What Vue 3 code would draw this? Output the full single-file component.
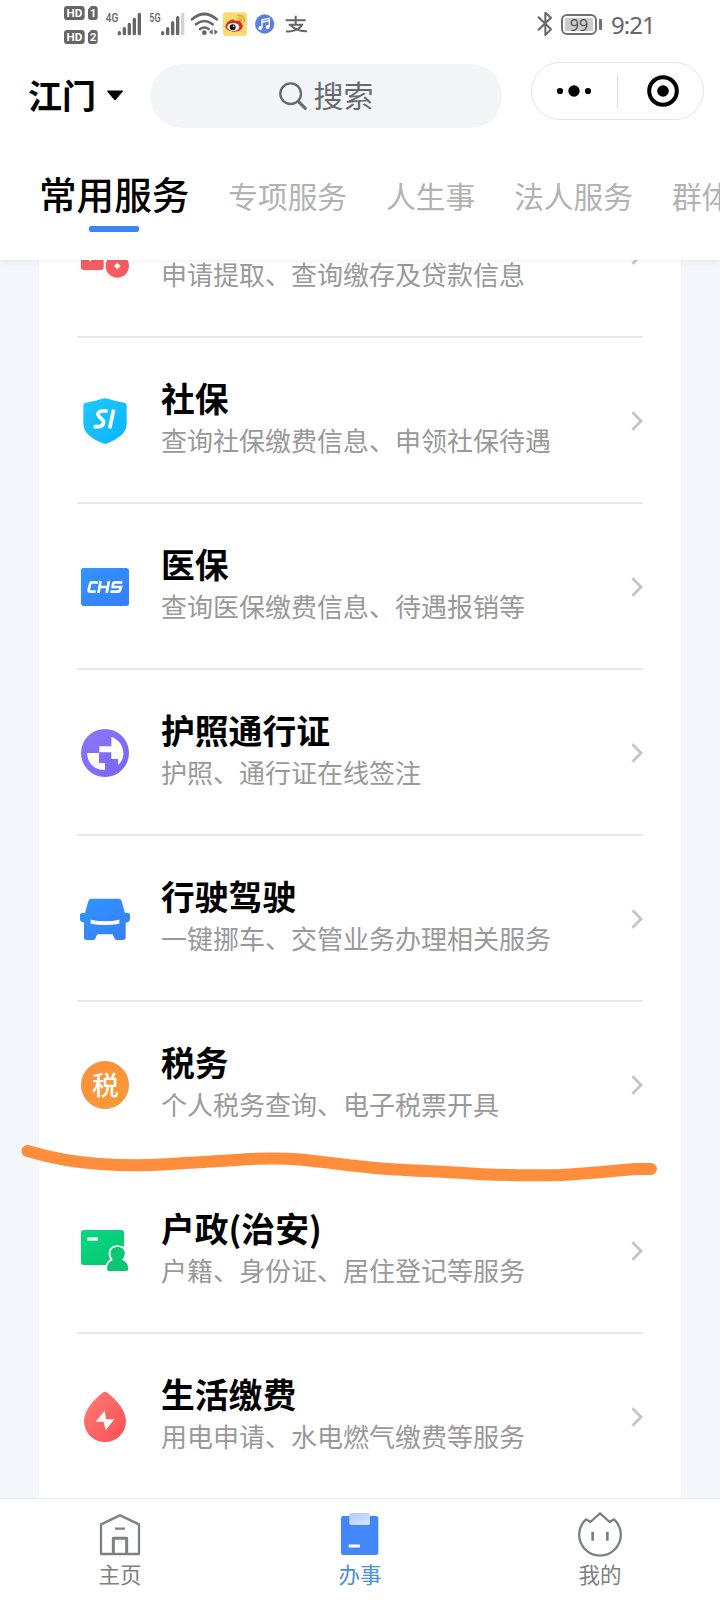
<script setup>
const tabs = ['专项服务', '人生事', '法人服务', '群体服务']

const services = [
  { id: 'fund', title: '公积金', desc: '申请提取、查询缴存及贷款信息', box: '144 -66 162 162' },
  { id: 'social', title: '社保', desc: '查询社保缴费信息、申领社保待遇', box: '144 432 162 162' },
  { id: 'medical', title: '医保', desc: '查询医保缴费信息、待遇报销等', box: '54 60 162 162' },
  { id: 'passport', title: '护照通行证', desc: '护照、通行证在线签注', box: '54 558 162 162' },
  { id: 'drive', title: '行驶驾驶', desc: '一键挪车、交管业务办理相关服务', box: '54 66 162 162' },
  { id: 'tax', title: '税务', desc: '个人税务查询、电子税票开具', box: '54 564 162 162', plain: true },
  { id: 'household', title: '户政(治安)', desc: '户籍、身份证、居住登记等服务', box: '234 282 162 162' },
  { id: 'living', title: '生活缴费', desc: '用电申请、水电燃气缴费等服务', box: '54 90 162 162', plain: true },
]
</script>

<template>
  <div class="phone">
    <header class="top">
      <div class="status">
        <svg class="status-left" width="270" height="48" viewBox="0 0 810 144">
          <g fill="#666">
            <rect x="42" y="18" width="62" height="42" rx="10" />
            <path d="M124 18h10q9 0 9 9v24q0 9-9 9h-11q-9 0-9-9V28z" />
            <rect x="42" y="90" width="62" height="42" rx="10" />
            <path d="M124 90h10q9 0 9 9v24q0 9-9 9h-11q-9 0-9-9v-23z" />
          </g>
          <g class="badge-text" text-anchor="middle">
            <text x="73" y="51">HD</text>
            <text x="129" y="51">1</text>
            <text x="73" y="123">HD</text>
            <text x="129" y="123">2</text>
          </g>
          <g class="net-text">
            <text x="167" y="67" textLength="38" lengthAdjust="spacingAndGlyphs">4G</text>
            <text x="298" y="67" textLength="34" lengthAdjust="spacingAndGlyphs">5G</text>
          </g>
          <g fill="none" stroke="#666" stroke-width="10" stroke-linecap="round">
            <path d="M208 98v3M223 86v15M238 73v28M253 58v43M268 43v58" />
            <path d="M338 98v3M353 86v15M368 68v33M383 53v48" />
            <path d="M398 43v58" stroke="#d2d2d2" />
            <path d="M426 58Q463 26 500 58M438 73Q463 53 488 73M450 87Q463 78 476 87" stroke-width="8" />
          </g>
          <circle cx="463" cy="98" r="7" fill="#666" />
          <path d="M488 88v16l-11-8zM493 88v16l11-8z" fill="#666" />
          <rect x="519" y="37" width="72" height="71" rx="10" fill="#fbdc73" />
          <path d="M526 79q3-13 17-19 10-4 12 3 16-5 18 5 8 6 4 15-6 12-26 12-24-1-25-16z" fill="#dc2a25" />
          <ellipse cx="550" cy="81" rx="18" ry="12" fill="#fff" />
          <circle cx="548" cy="82" r="9" fill="#151515" />
          <circle cx="551" cy="79" r="2.5" fill="#fff" />
          <path d="M564 46q19-1 19 18M565 55q9 0 9 9" fill="none" stroke="#eda52d" stroke-width="5" stroke-linecap="round" />
          <circle cx="644" cy="72" r="29" fill="#5b80df" />
          <path d="M636 83V60l22-5v25M636 67l22-5" fill="none" stroke="#fff" stroke-width="4" />
          <circle cx="631" cy="84" r="6" fill="#fff" />
          <circle cx="653" cy="81" r="6" fill="#fff" />
          <path d="M707 61h60M737 47v27M716 74h40C752 86 728 97 708 94M722 76C732 86 750 94 771 94" fill="none" stroke="#666" stroke-width="6" />
        </svg>
        <div class="status-right">
          <svg width="16" height="26" viewBox="52 34 48 78">
            <path d="M55 51l39 38-17 17V39l17 15-39 38" fill="none" stroke="#666" stroke-width="6" stroke-linejoin="round" />
          </svg>
          <div class="battery"><span>99</span></div>
          <time>9:21</time>
        </div>
      </div>

      <div class="nav">
        <div class="city">
          <span>江门</span>
          <svg width="18" height="11" viewBox="0 0 18 11"><path d="M2 .5h14q1.500 0 .6 1.200L10 9.500q-1 1-2 0L1.400 1.700Q.5.5 2 .5z" fill="#000" /></svg>
        </div>
        <div class="search">
          <svg width="28" height="28" viewBox="836 95 84 84">
            <circle cx="871" cy="130" r="31" fill="none" stroke="#666a6f" stroke-width="7" />
            <path d="M894 153l21 21" stroke="#666a6f" stroke-width="9" stroke-linecap="round" />
          </svg>
          <span>搜索</span>
        </div>
        <div class="capsule">
          <svg width="36" height="14" viewBox="0 0 36 14"><circle cx="4" cy="7" r="3.100" /><circle cx="18" cy="7" r="5.700" /><circle cx="32" cy="7" r="3.100" /></svg>
          <i></i>
          <svg width="34" height="34" viewBox="0 0 34 34"><circle cx="17" cy="17" r="13.800" fill="none" stroke="#000" stroke-width="4" /><circle cx="17" cy="17" r="5.800" /></svg>
        </div>
      </div>

      <nav class="tabs">
        <div class="tab active">常用服务</div>
        <div v-for="t in tabs" :key="t" class="tab">{{ t }}</div>
      </nav>
    </header>

    <main class="body">
      <div class="card">
        <section v-for="s in services" :key="s.id" class="row" :class="{ plain: s.plain }">
          <svg class="icon" :viewBox="s.box">
            <defs>
              <linearGradient id="cyan" x1="0" y1="0" x2="1" y2="1"><stop stop-color="#21c8fb" /><stop offset="1" stop-color="#08b4ff" /></linearGradient>
              <linearGradient id="blue" x1="0" y1="0" x2="1" y2="1"><stop stop-color="#2f96ff" /><stop offset="1" stop-color="#3a7cfa" /></linearGradient>
              <linearGradient id="violet" x1="0" y1="0" x2="1" y2="1"><stop stop-color="#8c79f8" /><stop offset="1" stop-color="#7465f8" /></linearGradient>
              <linearGradient id="amber" x1="0" y1="0" x2="1" y2="1"><stop stop-color="#ff8f3c" /><stop offset="1" stop-color="#f99b34" /></linearGradient>
              <linearGradient id="green" x1="0" y1="0" x2="1" y2="1"><stop stop-color="#05d885" /><stop offset="1" stop-color="#0bc56d" /></linearGradient>
              <linearGradient id="red" x1="0" y1="0" x2="1" y2="1"><stop stop-color="#ff7b74" /><stop offset="1" stop-color="#fb5055" /></linearGradient>
            </defs>
            <g v-if="s.id === 'fund'">
              <path d="M153-30h68v82q0 8-8 8h-52q-8 0-8-8z" fill="#f95c60" />
              <path d="M171 24h21M181 14v20" stroke="#fff" stroke-width="6" />
              <circle cx="262" cy="48" r="40" fill="#fff" />
              <circle cx="262" cy="48" r="35" fill="#f95c60" />
              <path d="M262 38l10 10-10 10-10-10z" fill="#fff" />
            </g>
            <g v-else-if="s.id === 'social'">
              <path d="M216 446q9-3 18 0 26 9 49 12 7 1 7 8v54q0 23-18 37-16 13-40 23-7 3-14 0-24-10-40-23-18-14-18-37v-54q0-7 7-8 23-3 49-12z" fill="url(#cyan)" />
              <path d="M233 483h-16q-13 1-13 10 0 5 10 13 9 8 6 15-3 8-12 9h-17" fill="none" stroke="#fff" stroke-width="11" />
              <path d="M251 479l-12 56" stroke="#fff" stroke-width="11" />
            </g>
            <g v-else-if="s.id === 'medical'">
              <rect x="63" y="84" width="144" height="114" rx="8" fill="url(#blue)" />
              <path d="M114 127H97q-6 0-7 6l-4 17q-1 5 5 5h16M122 123l-7 36M147 123l-7 36M118 141h27M187 127h-22q-5 0-6 6l-1 8h25l-3 9q-1 5-6 5h-23" fill="none" stroke="#fff" stroke-width="8" />
            </g>
            <g v-else-if="s.id === 'passport'">
              <circle cx="135" cy="639" r="72" fill="url(#violet)" />
              <path d="M154 590q37 15 36 54-2 20-16 31v-18h-20v-20h-36v-18h36z" fill="#fff" />
              <path d="M81 639h36v30h18v21q-50-1-54-51z" fill="#fff" />
            </g>
            <g v-else-if="s.id === 'drive'">
              <path d="M94 86h82q7 0 9 7l10 36h9q6 0 6 6v13q0 6-6 8l-7 2v45q0 7-7 7h-20q-5 0-7-6l-5-11h-46l-5 11q-2 6-7 6H79q-7 0-7-7v-45l-6-2q-6-2-6-8v-13q0-6 6-6h9l10-36q2-7 9-7z" fill="url(#blue)" />
              <path d="M92 149q43 10 86 0v12q-43 8-86 0z" fill="#fff" />
            </g>
            <g v-else-if="s.id === 'tax'">
              <circle cx="135" cy="645" r="71" fill="url(#amber)" stroke="#d9934e" stroke-width="2" />
              <text class="tax-text" x="136" y="674" text-anchor="middle">税</text>
            </g>
            <g v-else-if="s.id === 'household'">
              <rect x="243" y="300" width="129" height="105" rx="8" fill="url(#green)" />
              <path d="M262 327h32" stroke="#fff" stroke-width="10" />
              <path d="M353 351c-26 0-26 27-13 38-12 5-19 14-19 28q0 6 6 6h52q6 0 6-6c0-14-7-23-19-28 13-11 13-38-13-38z" fill="#fff" stroke="#fff" stroke-width="11" />
              <path d="M353 351c-26 0-26 27-13 38-12 5-19 14-19 28q0 6 6 6h52q6 0 6-6c0-14-7-23-19-28 13-11 13-38-13-38z" fill="#0bc774" />
            </g>
            <g v-else>
              <path d="M128 98q7-5 14 0C172 122 198 152 198 184A63 62 0 0 1 72 184C72 152 98 122 128 98z" fill="url(#red)" />
              <path d="M134 152l-27 33h24l6 26 26-33h-25z" fill="#fff" />
            </g>
          </svg>
          <div class="text">
            <h2>{{ s.title }}</h2>
            <p>{{ s.desc }}</p>
          </div>
          <svg class="chevron" width="12" height="20" viewBox="0 0 12 20"><path d="M1.500 1.200L10 10l-8.500 8.800" fill="none" stroke="#c6c6c6" stroke-width="2.800" /></svg>
        </section>
      </div>
    </main>

    <footer class="bar">
      <div class="item">
        <svg viewBox="108 450 144 144" fill="none" stroke="#7c8085" stroke-width="7" stroke-linejoin="round">
          <path d="M180 466l57 27v89H123v-89zM165 506h30" />
          <path d="M160 582v-47h40v47" stroke-width="9" />
        </svg>
        <span>主页</span>
      </div>
      <div class="item on">
        <svg viewBox="48 90 144 144">
          <defs><linearGradient id="clip" x1="0" y1="0" x2="1" y2="1"><stop stop-color="#b3cbfc" /><stop offset="1" stop-color="#d8e4ff" /></linearGradient></defs>
          <rect x="63" y="108" width="112" height="117" rx="7" fill="#4388fb" />
          <rect x="88" y="99" width="62" height="36" rx="5" fill="url(#clip)" />
          <path d="M86 198h34" stroke="#fff" stroke-width="9" />
        </svg>
        <span>办事</span>
      </div>
      <div class="item">
        <svg viewBox="768 90 144 144" fill="none" stroke="#7c8085" stroke-width="7" stroke-linejoin="round">
          <path d="M840 100l29 26 13-8A62.500 62.500 0 1 1 798 118l13 8z" />
          <path d="M818 155v27M862 155v27" stroke-width="8" />
        </svg>
        <span>我的</span>
      </div>
    </footer>

    <svg class="marker" width="720" height="60" viewBox="0 1130 720 60">
      <path d="M27.500 1151C48 1157 75 1162.500 100 1164C125 1165.500 145 1165.500 162 1164.500C190 1162.500 225 1161 250 1159C270 1158 285 1158.300 300 1159.500C325 1162 350 1165.500 375 1168C400 1170.500 435 1171 460 1172.800C490 1175.500 525 1175.500 560 1175C590 1173.500 620 1170 636 1169H651" fill="none" stroke="#ff8d3b" stroke-width="12" stroke-linecap="round" stroke-linejoin="round" />
    </svg>
  </div>
</template>

<style>
body { background: #fff; }
</style>

<style scoped>
.phone {
  position: relative;
  display: flex;
  flex-direction: column;
  width: 720px;
  height: 1600px;
  overflow: hidden;
  background: #f3f6fa;
  font-family: "Noto Sans CJK SC", sans-serif;
}
.top {
  flex: none;
  height: 260px;
  background: #fff;
  box-shadow: 0 1px 6px rgba(0, 0, 0, 0.07);
  z-index: 1;
}
.status {
  display: flex;
  justify-content: space-between;
  height: 48px;
  padding: 0 65px 0 50px;
}
.badge-text {
  font: bold 35px "Roboto", sans-serif;
  fill: #fff;
}
.net-text {
  font: 500 39px "Roboto", sans-serif;
  fill: #666;
}
.status-right {
  display: flex;
  align-items: center;
}
.battery {
  position: relative;
  box-sizing: border-box;
  width: 36px;
  height: 21px;
  margin: 0 14px 0 8px;
  padding: 2px;
  border: 2px solid #707070;
  border-radius: 6px;
}
.battery::after {
  content: "";
  position: absolute;
  right: -7px;
  top: 3px;
  width: 3px;
  height: 11px;
  border-radius: 1px;
  background: #707070;
}
.battery span {
  display: block;
  height: 13px;
  background: #ccc;
  color: #4d4d4d;
  font: 500 16px/14px "Open Sans", sans-serif;
  text-align: center;
}
.status time {
  color: #666;
  font: 24px/48px "Noto Sans", sans-serif;
  letter-spacing: -1px;
  width: 44px;
  padding-top: 2px;
  white-space: nowrap;
}
.nav {
  display: flex;
  align-items: flex-start;
  height: 108px;
  padding: 14px 16px 0 28px;
  box-sizing: border-box;
}
.city {
  display: flex;
  align-items: center;
  width: 122px;
  height: 66px;
  font-size: 34px;
  font-weight: 700;
  gap: 10px;
}
.city span { margin-top: -2px; }
.search {
  display: flex;
  align-items: center;
  justify-content: center;
  width: 352px;
  height: 64px;
  margin-top: 2px;
  gap: 7px;
  border-radius: 32px;
  background: #f3f6f9;
  color: #666a6f;
  font-size: 30px;
}
.search span { margin-top: -4px; }
.capsule {
  display: flex;
  align-items: center;
  box-sizing: border-box;
  width: 173px;
  height: 58px;
  margin-left: 29px;
  padding: 0 22px 0 24px;
  border: 1px solid #e5e5e5;
  border-radius: 29px;
}
.capsule i {
  flex: none;
  width: 1px;
  height: 34px;
  margin: 0 28px 0 25px;
  background: #ddd;
}
.capsule svg { flex: none; }
.tabs {
  display: flex;
  gap: 39px;
  height: 104px;
  padding-left: 39px;
  overflow: hidden;
  white-space: nowrap;
}
.tab {
  flex: none;
  height: 84px;
  color: #b2b2b2;
  font-size: 29.700px;
  line-height: 80px;
}
.active {
  display: flex;
  flex-direction: column;
  align-items: center;
  color: #000;
  font-size: 37.600px;
  font-weight: 500;
  line-height: 74px;
}
.active::after {
  content: "";
  flex: none;
  width: 50px;
  height: 6px;
  margin-top: -4px;
  border-radius: 2px;
  background: #3b86f7;
}
.body {
  flex: 1;
  min-height: 0;
  overflow: hidden;
  padding: 0 39px;
}
.card {
  margin-top: -88px;
  padding: 0 38px;
  background: #fff;
}
.row {
  display: flex;
  align-items: center;
  box-sizing: border-box;
  height: 166px;
  padding: 2px 0 0 1px;
  border-bottom: 2px solid #e9e9e9;
}
.plain { border-color: transparent; }
.icon {
  flex: none;
  width: 54px;
  height: 54px;
}
.tax-text {
  font: 500 80px "Noto Sans CJK SC", sans-serif;
  fill: #fff;
}
.text {
  flex: 1;
  margin: -7px 0 0 29px;
  white-space: nowrap;
}
h2, p { margin: 0; }
h2 {
  color: #000;
  font-size: 33.800px;
  font-weight: 700;
  line-height: 44px;
}
p {
  color: #999;
  font-size: 26px;
  line-height: 40px;
}
.chevron { flex: none; }
.bar {
  display: flex;
  flex: none;
  box-sizing: border-box;
  height: 102px;
  border-top: 1px solid #e6e8ea;
  background: #fff;
}
.item {
  display: flex;
  flex: 1;
  flex-direction: column;
  align-items: center;
  padding-top: 11px;
  color: #808080;
  font-size: 21.500px;
  line-height: 32px;
}
.item svg {
  width: 48px;
  height: 48px;
}
.on { color: #4a90e2; }
.marker {
  position: absolute;
  left: 0;
  top: 1130px;
  z-index: 2;
}
</style>
